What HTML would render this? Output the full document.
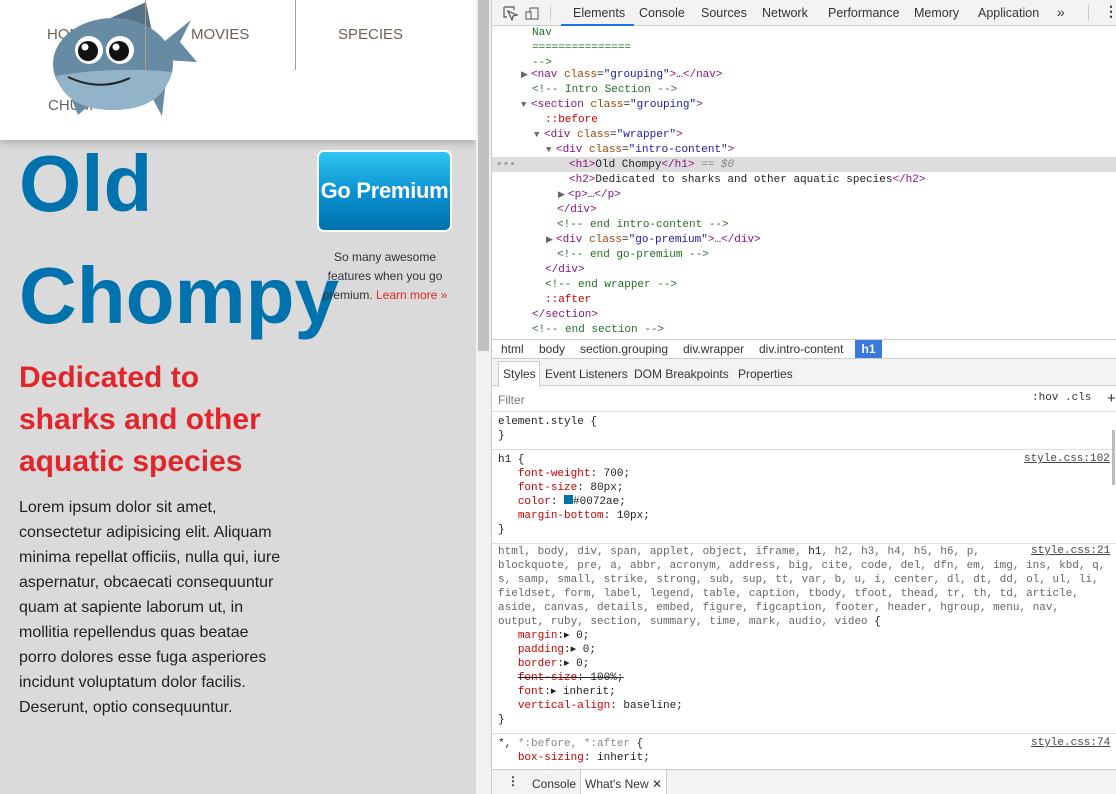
<!DOCTYPE html>
<html><head><meta charset="utf-8"><style>
*{margin:0;padding:0;box-sizing:border-box}
body{width:1116px;height:794px;overflow:hidden;position:relative;background:#fff;font-family:"Liberation Sans",sans-serif}
.abs{position:absolute}
#left{left:0;top:0;width:476px;height:794px;background:#dadada;overflow:hidden}
#nav{left:0;top:0;width:476px;height:140px;background:#fff;box-shadow:0 2px 8px rgba(0,0,0,.25)}
.nv{font-size:15px;color:#6b6257;position:absolute}
.mono{font-family:"Liberation Mono",monospace;font-size:11px;white-space:pre;position:absolute;color:#222}
.dl{font-family:"Liberation Mono",monospace;font-size:11px;white-space:pre;position:absolute;color:#222;line-height:15px;height:15px}
.tag{color:#881280}.at{color:#994500}.av{color:#1a1aa6}.cm{color:#236e25}.pr{color:#c80000}.gy{color:#888}
.tb{font-size:12.5px;color:#333;position:absolute}
.ts{font-size:12px;color:#333;position:absolute}
.ar{color:#666;font-size:9px;display:inline-block;width:10px}
</style></head><body>
<div id="left" class="abs">
 <div id="nav" class="abs">
  <div class="nv" style="left:47px;top:26px">HOME</div>
  <div class="nv" style="left:191px;top:26px">MOVIES</div>
  <div class="nv" style="left:338px;top:26px">SPECIES</div>
  <div class="nv" style="left:48px;top:97px">CHUM</div>
  <div class="abs" style="left:295px;top:0;width:1px;height:70px;background:#a99e8f"></div>
  <svg class="abs" style="left:0;top:0" width="220" height="130" viewBox="0 0 220 130">
   <path d="M95 25 L146 2 L152 32 Z" fill="#577389"/>
   <path d="M160 45 L191 20 L180 42 L197 62 L165 60 Z" fill="#668ba3"/>
   <path d="M68 90 L78 115 L95 100 Z" fill="#668ba3"/>
   <path d="M148 90 L162 116 L166 80 Z" fill="#668ba3"/>
   <ellipse cx="113" cy="64" rx="60" ry="46" fill="#668ba3"/>
   <path d="M56 76 Q113 66 172 72 Q162 110 113 110 Q66 110 56 76 Z" fill="#93b3c8"/>
   <path d="M68 77 Q100 92 130 78" stroke="#222" stroke-width="2" fill="none"/>
   <circle cx="89" cy="50" r="14" fill="#fff"/><circle cx="120" cy="50" r="14" fill="#fff"/>
   <circle cx="88" cy="51" r="10" fill="#111"/><circle cx="119" cy="51" r="10" fill="#111"/>
   <circle cx="85" cy="47" r="3.5" fill="#fff"/><circle cx="116" cy="47" r="3.5" fill="#fff"/>
   <rect x="145" y="0" width="1" height="70" fill="#a99e8f"/>
  </svg>
 </div>
 <div class="abs" style="left:19px;top:128px;font-size:80px;font-weight:700;color:#0072ae;line-height:112px">Old<br>Chompy</div>
 <div class="abs" style="left:317px;top:150px;width:135px;height:82px;border:2px solid #fff;border-radius:7px;background:linear-gradient(#2ec6f1,#0a8fce 55%,#0072ae);color:#fff;font-weight:700;font-size:22px;line-height:78px;text-align:center;white-space:nowrap;letter-spacing:-0.3px">Go Premium</div>
 <div class="abs" style="left:318px;top:248px;width:134px;font-size:12px;line-height:19px;color:#333;text-align:center">So many awesome features when you go premium. <span style="color:#e0252b">Learn more »</span></div>
 <div class="abs" style="left:19px;top:357px;width:280px;font-size:30px;font-weight:700;color:#e0252b;line-height:42px">Dedicated to sharks and other aquatic species</div>
 <div class="abs" style="left:19px;top:495px;width:270px;font-size:16px;color:#222;line-height:25px">Lorem ipsum dolor sit amet, consectetur adipisicing elit. Aliquam minima repellat officiis, nulla qui, iure aspernatur, obcaecati consequuntur quam at sapiente laborum ut, in mollitia repellendus quas beatae porro dolores esse fuga asperiores incidunt voluptatum dolor facilis. Deserunt, optio consequuntur.</div>
</div>
<div class="abs" style="left:476px;top:0;width:15px;height:794px;background:#f1f1f1"></div>
<div class="abs" style="left:478px;top:0;width:11px;height:351px;background:#c1c1c1"></div>
<div class="abs" style="left:491px;top:0;width:1px;height:794px;background:#ccc"></div>

<div class="abs" style="left:492px;top:0;width:624px;height:26px;background:#f3f3f3;border-bottom:1px solid #ccc"></div>
<svg class="abs" style="left:502px;top:5px" width="40" height="16"><path d="M2 2h10v3M2 2v10h3M6 6l4 9 1-4 4-1z" stroke="#555" fill="none" stroke-width="1.2"/><rect x="28" y="3" width="8" height="11" stroke="#555" fill="none"/><rect x="24" y="7" width="5" height="7" stroke="#555" fill="#f3f3f3"/></svg>
<div class="abs" style="left:550px;top:5px;width:1px;height:16px;background:#ccc"></div>
<div class="tb" style="left:573px;top:6px">Elements</div>
<div class="abs" style="left:561px;top:24px;width:73px;height:2px;background:#1a73e8"></div>
<div class="tb" style="left:639px;top:6px">Console</div>
<div class="tb" style="left:701px;top:6px">Sources</div>
<div class="tb" style="left:762px;top:6px">Network</div>
<div class="tb" style="left:828px;top:6px">Performance</div>
<div class="tb" style="left:914px;top:6px">Memory</div>
<div class="tb" style="left:978px;top:6px">Application</div>
<div class="tb" style="left:1057px;top:4px;font-size:14px">»</div>
<div class="abs" style="left:1088px;top:5px;width:1px;height:16px;background:#ccc"></div>
<div class="tb" style="left:1104px;top:3px;font-size:14px;font-weight:700">⋮</div>

<div class="abs" style="left:492px;top:157px;width:624px;height:15px;background:#ddd"></div>
<div class="dl" style="left:496px;top:158px;color:#999">•••</div>
<div class="dl cm" style="left:532px;top:26px">Nav</div>
<div class="dl cm" style="left:532px;top:41px">===============</div>
<div class="dl cm" style="left:532px;top:56px">--&gt;</div>
<div class="dl" style="left:521px;top:68px"><span class="ar">▶</span><span class="tag">&lt;nav</span> <span class="at">class</span>=<span class="av">"grouping"</span><span class="tag">&gt;</span>…<span class="tag">&lt;/nav&gt;</span></div>
<div class="dl cm" style="left:532px;top:83px">&lt;!-- Intro Section --&gt;</div>
<div class="dl" style="left:521px;top:98px"><span class="ar">▼</span><span class="tag">&lt;section</span> <span class="at">class</span>=<span class="av">"grouping"</span><span class="tag">&gt;</span></div>
<div class="dl pr" style="left:545px;top:113px">::before</div>
<div class="dl" style="left:534px;top:128px"><span class="ar">▼</span><span class="tag">&lt;div</span> <span class="at">class</span>=<span class="av">"wrapper"</span><span class="tag">&gt;</span></div>
<div class="dl" style="left:546px;top:143px"><span class="ar">▼</span><span class="tag">&lt;div</span> <span class="at">class</span>=<span class="av">"intro-content"</span><span class="tag">&gt;</span></div>
<div class="dl" style="left:569px;top:158px"><span class="tag">&lt;h1&gt;</span>Old Chompy<span class="tag">&lt;/h1&gt;</span> <span class="gy">== <i>$0</i></span></div>
<div class="dl" style="left:569px;top:173px"><span class="tag">&lt;h2&gt;</span>Dedicated to sharks and other aquatic species<span class="tag">&lt;/h2&gt;</span></div>
<div class="dl" style="left:558px;top:188px"><span class="ar">▶</span><span class="tag">&lt;p&gt;</span>…<span class="tag">&lt;/p&gt;</span></div>
<div class="dl tag" style="left:557px;top:203px">&lt;/div&gt;</div>
<div class="dl cm" style="left:557px;top:218px">&lt;!-- end intro-content --&gt;</div>
<div class="dl" style="left:546px;top:233px"><span class="ar">▶</span><span class="tag">&lt;div</span> <span class="at">class</span>=<span class="av">"go-premium"</span><span class="tag">&gt;</span>…<span class="tag">&lt;/div&gt;</span></div>
<div class="dl cm" style="left:557px;top:248px">&lt;!-- end go-premium --&gt;</div>
<div class="dl tag" style="left:545px;top:263px">&lt;/div&gt;</div>
<div class="dl cm" style="left:545px;top:278px">&lt;!-- end wrapper --&gt;</div>
<div class="dl pr" style="left:545px;top:293px">::after</div>
<div class="dl tag" style="left:532px;top:308px">&lt;/section&gt;</div>
<div class="dl cm" style="left:532px;top:323px">&lt;!-- end section --&gt;</div>

<div class="abs" style="left:492px;top:339px;width:624px;height:20px;background:#fff;border-top:1px solid #ccc;border-bottom:1px solid #ccc"></div>
<div class="ts" style="left:501px;top:342px">html</div>
<div class="ts" style="left:539px;top:342px">body</div>
<div class="ts" style="left:580px;top:342px">section.grouping</div>
<div class="ts" style="left:683px;top:342px">div.wrapper</div>
<div class="ts" style="left:759px;top:342px">div.intro-content</div>
<div class="abs" style="left:855px;top:340px;width:27px;height:18px;background:#3879d9;color:#fff;font-size:12px;font-weight:700;text-align:center;line-height:18px">h1</div>

<div class="abs" style="left:492px;top:359px;width:624px;height:27px;background:#f3f3f3;border-bottom:1px solid #ccc"></div>
<div class="abs" style="left:498px;top:361px;width:42px;height:26px;background:#fff;border:1px solid #ccc;border-bottom:none"></div>
<div class="ts" style="left:503px;top:367px">Styles</div>
<div class="ts" style="left:545px;top:367px">Event Listeners</div>
<div class="ts" style="left:634px;top:367px">DOM Breakpoints</div>
<div class="ts" style="left:738px;top:367px">Properties</div>
<div class="ts" style="left:498px;top:393px;color:#777">Filter</div>
<div class="ts" style="left:1032px;top:392px;font-family:'Liberation Mono',monospace;font-size:11px">:hov  .cls</div>
<div class="ts" style="left:1107px;top:390px;font-size:15px">+</div>
<div class="abs" style="left:492px;top:411px;width:624px;height:1px;background:#ddd"></div>

<div class="mono" style="left:498px;top:415px;line-height:14px">element.style {
}</div>
<div class="abs" style="left:492px;top:449px;width:624px;height:1px;background:#ddd"></div>
<div class="mono" style="left:498px;top:453px;line-height:14px">h1 {
   <span class="pr">font-weight</span>: 700;
   <span class="pr">font-size</span>: 80px;
   <span class="pr">color</span>: <span style="display:inline-block;width:9px;height:9px;background:#0072ae"></span>#0072ae;
   <span class="pr">margin-bottom</span>: 10px;
}</div>
<div class="mono" style="left:1024px;top:453px;text-decoration:underline;color:#444">style.css:102</div>
<div class="abs" style="left:492px;top:543px;width:624px;height:1px;background:#ddd"></div>
<div class="mono" style="left:498px;top:545px;line-height:14px;color:#666">html, body, div, span, applet, object, iframe, <span style="color:#222">h1</span>, h2, h3, h4, h5, h6, p,
blockquote, pre, a, abbr, acronym, address, big, cite, code, del, dfn, em, img, ins, kbd, q,
s, samp, small, strike, strong, sub, sup, tt, var, b, u, i, center, dl, dt, dd, ol, ul, li,
fieldset, form, label, legend, table, caption, tbody, tfoot, thead, tr, th, td, article,
aside, canvas, details, embed, figure, figcaption, footer, header, hgroup, menu, nav,
output, ruby, section, summary, time, mark, audio, video <span style="color:#222">{</span>
<span style="color:#222">   <span class="pr">margin</span>:▸ 0;
   <span class="pr">padding</span>:▸ 0;
   <span class="pr">border</span>:▸ 0;
   <s><span class="pr">font-size</span>: 100%;</s>
   <span class="pr">font</span>:▸ inherit;
   <span class="pr">vertical-align</span>: baseline;
}</span></div>
<div class="mono" style="left:1031px;top:545px;text-decoration:underline;color:#444">style.css:21</div>
<div class="abs" style="left:492px;top:733px;width:624px;height:1px;background:#ddd"></div>
<div class="mono" style="left:498px;top:737px;line-height:14px">*, <span class="gy">*:before, *:after</span> {
   <span class="pr">box-sizing</span>: inherit;</div>
<div class="mono" style="left:1031px;top:737px;text-decoration:underline;color:#444">style.css:74</div>
<div class="abs" style="left:1112px;top:430px;width:3px;height:55px;background:#bbb"></div>

<div class="abs" style="left:492px;top:769px;width:624px;height:25px;background:#f3f3f3;border-top:1px solid #ccc"></div>
<div class="ts" style="left:507px;top:774px;font-weight:700">⋮</div>
<div class="ts" style="left:532px;top:777px">Console</div>
<div class="abs" style="left:580px;top:770px;width:87px;height:24px;background:#fff;border-left:1px solid #ccc;border-right:1px solid #ccc"></div>
<div class="ts" style="left:585px;top:777px">What's New ✕</div>
</body></html>
